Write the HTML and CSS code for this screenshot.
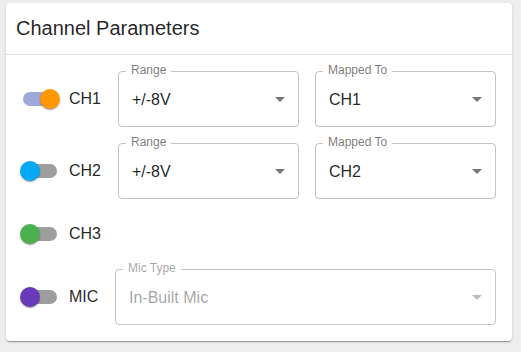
FILE: index.html
```html
<!DOCTYPE html>
<html>
<head>
<meta charset="utf-8">
<link rel="stylesheet" href="styles.css">
</head>
<body>
<div class="card">
  <div class="card-header">Channel Parameters</div>
  <div class="card-content">
    <div class="row">
      <div class="ctl">
        <span class="switch"><span class="track track-on"></span><span class="thumb thumb-on orange"></span></span>
        <span class="ctl-label">CH1</span>
      </div>
      <div class="fields">
        <div class="field">
          <span class="field-label">Range</span>
          <span class="value">+/-8V</span>
          <svg class="arrow" viewBox="0 0 24 24" width="24" height="24"><path d="M7 10l5 5 5-5z"/></svg>
        </div>
        <div class="field">
          <span class="field-label">Mapped To</span>
          <span class="value">CH1</span>
          <svg class="arrow" viewBox="0 0 24 24" width="24" height="24"><path d="M7 10l5 5 5-5z"/></svg>
        </div>
      </div>
    </div>
    <div class="row">
      <div class="ctl">
        <span class="switch"><span class="track"></span><span class="thumb blue"></span></span>
        <span class="ctl-label">CH2</span>
      </div>
      <div class="fields">
        <div class="field">
          <span class="field-label">Range</span>
          <span class="value">+/-8V</span>
          <svg class="arrow" viewBox="0 0 24 24" width="24" height="24"><path d="M7 10l5 5 5-5z"/></svg>
        </div>
        <div class="field">
          <span class="field-label">Mapped To</span>
          <span class="value">CH2</span>
          <svg class="arrow" viewBox="0 0 24 24" width="24" height="24"><path d="M7 10l5 5 5-5z"/></svg>
        </div>
      </div>
    </div>
    <div class="row">
      <div class="ctl">
        <span class="switch"><span class="track"></span><span class="thumb green"></span></span>
        <span class="ctl-label">CH3</span>
      </div>
    </div>
    <div class="row">
      <div class="ctl ctl-mic">
        <span class="switch"><span class="track"></span><span class="thumb purple"></span></span>
        <span class="ctl-label">MIC</span>
      </div>
      <div class="fields">
        <div class="field disabled">
          <span class="field-label">Mic Type</span>
          <span class="value">In-Built Mic</span>
          <svg class="arrow" viewBox="0 0 24 24" width="24" height="24"><path d="M7 10l5 5 5-5z"/></svg>
        </div>
      </div>
    </div>
  </div>
</div>
</body>
</html>
```
FILE: styles.css
```css
html, body {
  margin: 0;
  background: #eeeeee;
}
body {
  padding: 3px 9px 9px 6px;
  font-family: "Liberation Sans", Arial, sans-serif;
  color: rgba(0, 0, 0, 0.87);
}
.card {
  background: #fff;
  border-radius: 4px;
  box-shadow: 0px 2px 1px -1px rgba(0,0,0,0.2), 0px 1px 1px 0px rgba(0,0,0,0.14), 0px 1px 3px 0px rgba(0,0,0,0.12);
}
.card-header {
  height: 51px;
  padding: 0 10px;
  display: flex;
  align-items: center;
  font-size: 20px;
  border-bottom: 1px solid rgba(0, 0, 0, 0.12);
}
.card-content {
  padding: 16px;
  display: flex;
  flex-direction: column;
  gap: 16px;
}
.row {
  display: flex;
  align-items: center;
}
.ctl {
  display: flex;
  align-items: center;
  margin-left: -11px;
  width: 107px;
  flex: none;
}
.ctl-mic {
  width: 104px;
}
.ctl-label {
  font-size: 16px;
  line-height: 24px;
}
.switch {
  position: relative;
  width: 58px;
  height: 38px;
  padding: 12px;
  box-sizing: border-box;
  display: inline-block;
  flex: none;
}
.track {
  display: block;
  width: 34px;
  height: 14px;
  border-radius: 7px;
  background: #9e9e9e;
}
.track-on {
  background: #9fa8da;
}
.thumb {
  position: absolute;
  top: 9px;
  left: 9px;
  width: 20px;
  height: 20px;
  border-radius: 50%;
  box-shadow: 0px 2px 1px -1px rgba(0,0,0,0.2), 0px 1px 1px 0px rgba(0,0,0,0.14), 0px 1px 3px 0px rgba(0,0,0,0.12);
}
.thumb-on {
  left: 29px;
}
.orange { background: #ff9800; }
.blue { background: #03a9f4; }
.green { background: #4caf50; }
.purple { background: #673ab7; }
.fields {
  flex: 1;
  display: flex;
  gap: 16px;
}
.field {
  flex: 1;
  position: relative;
  height: 56px;
  box-sizing: border-box;
  border: 1px solid rgba(0, 0, 0, 0.23);
  border-radius: 4px;
  display: flex;
  align-items: center;
  padding-left: 13px;
}
.field-label {
  position: absolute;
  top: -9px;
  left: 7px;
  padding: 0 5px;
  background: #fff;
  font-size: 12px;
  line-height: 14px;
  color: rgba(0, 0, 0, 0.54);
}
.value {
  flex: 1;
  font-size: 16px;
  line-height: 19px;
  color: rgba(0, 0, 0, 0.87);
}
.arrow {
  flex: none;
  margin-right: 6px;
  fill: rgba(0, 0, 0, 0.54);
}
.disabled {
  border-color: rgba(0, 0, 0, 0.23);
}
.disabled .field-label,
.disabled .value {
  color: rgba(0, 0, 0, 0.38);
}
.disabled .arrow {
  fill: rgba(0, 0, 0, 0.26);
}
```
